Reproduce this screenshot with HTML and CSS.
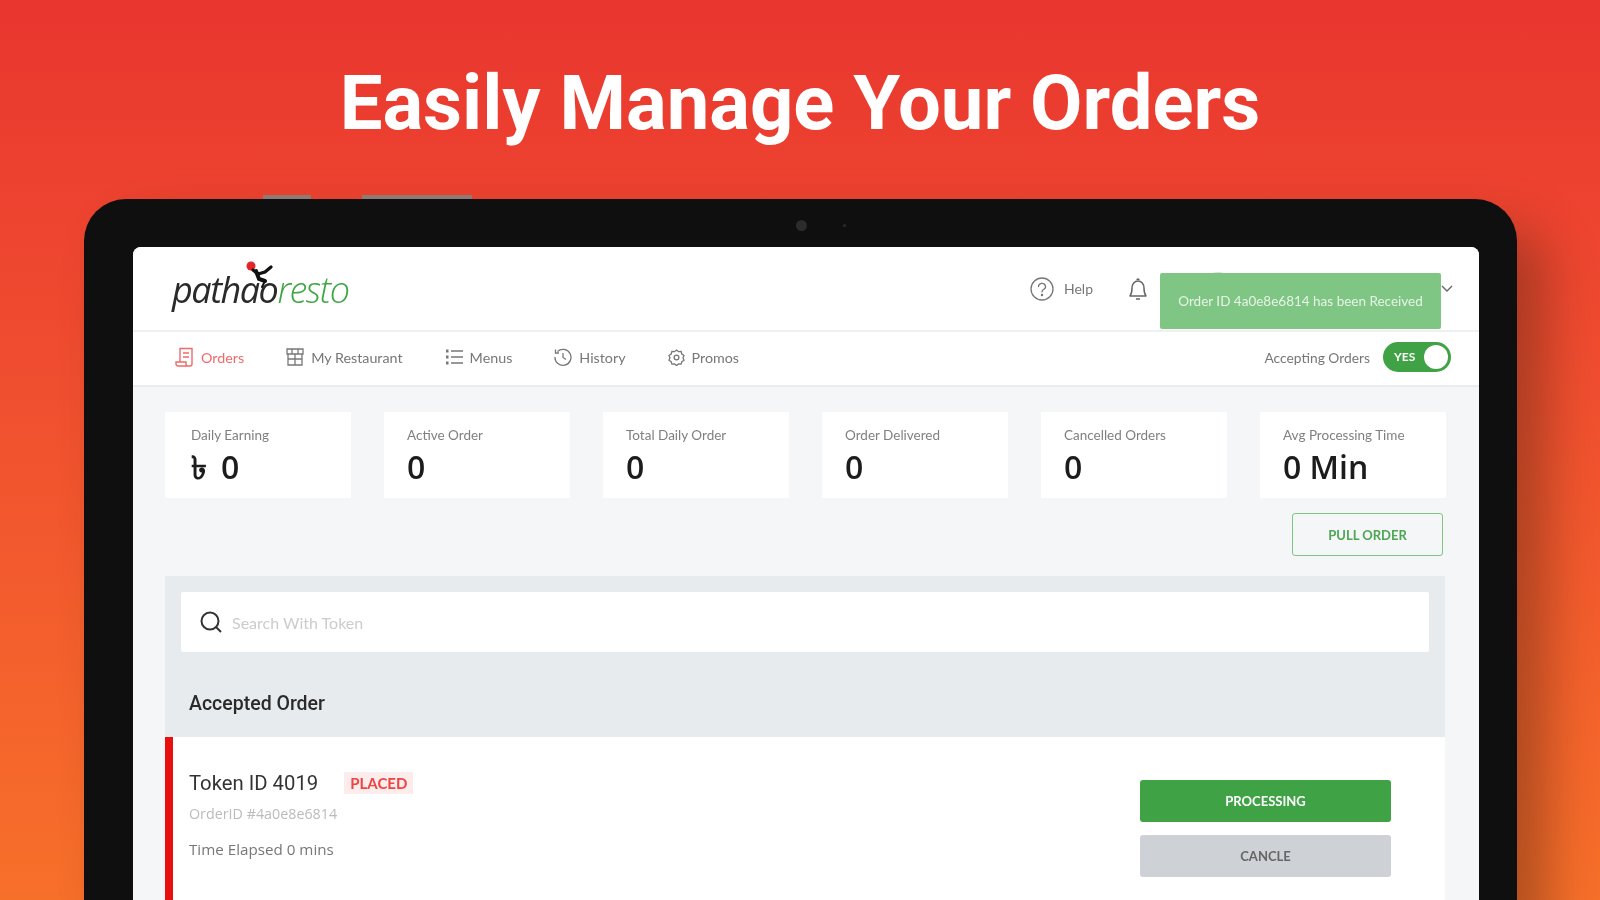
FILE: index.html
```html
<!DOCTYPE html>
<html lang="en">
<head>
    <meta charset="UTF-8">
    <meta name="viewport" content="width=device-width, initial-scale=1.0">
    <title>Easily Manage Your Orders</title>
    <link rel="stylesheet" href="styles.css">
</head>
<body>
    <div class="hero">
        <h1 class="hero-title">Easily Manage Your Orders</h1>

        <div class="tablet">
            <div class="tablet-buttons">
                <span class="side-btn side-btn-small"></span>
                <span class="side-btn side-btn-large"></span>
            </div>
            <div class="camera">
                <span class="lens"></span>
                <span class="sensor"></span>
            </div>

            <div class="screen">
                <header class="topbar">
                    <div class="logo">
                        <svg class="logo-rider" width="34" height="30" viewBox="0 0 34 30">
                            <circle cx="7" cy="5" r="4.500" fill="#e0262b"/>
                            <path d="M9 9l5 4 7-2 6-5" fill="none" stroke="#111" stroke-width="3.200" stroke-linecap="round"/>
                            <path d="M12 10l3 8 6 2" fill="none" stroke="#111" stroke-width="4" stroke-linecap="round"/>
                            <path d="M21 20l-3 6" fill="none" stroke="#111" stroke-width="2" stroke-linecap="round"/>
                        </svg>
                        <span class="logo-dark">pathao</span><span class="logo-green">resto</span>
                    </div>
                    <div class="topbar-right">
                        <div class="help">
                            <svg width="24" height="24" viewBox="0 0 24 24" fill="none" stroke="#777" stroke-width="1.3">
                                <circle cx="12" cy="12" r="11"/>
                                <path d="M8.500 9.500a3.500 3.200 0 1 1 5 3c-1 .6-1.500 1.200-1.500 2.400" stroke-linecap="round"/>
                                <circle cx="12" cy="18" r=".6"/>
                            </svg>
                            <span>Help</span>
                        </div>
                        <svg class="bell" width="22" height="26" viewBox="0 0 22 26" fill="none" stroke="#666" stroke-width="1.500">
                            <path d="M3 20c1.500-2 2-3 2-8 0-4 2.500-7 6-7s6 3 6 7c0 5 .5 6 2 8z" stroke-linejoin="round"/>
                            <path d="M9 23h4M10 4a1 1 0 0 1 2 0"/>
                        </svg>
                        <div class="account">
                            <span class="avatar"></span>
                            <svg width="12" height="8" viewBox="0 0 12 8" fill="none" stroke="#666" stroke-width="1.4"><path d="M1 1l5 5 5-5"/></svg>
                        </div>
                    </div>
                    <div class="toast">Order ID 4a0e8e6814 has been Received</div>
                </header>

                <nav class="tabs">
                    <a class="tab tab-active">
                        <svg width="19" height="20" viewBox="0 0 19 20" fill="none" stroke="currentColor" stroke-width="1.4">
                            <path d="M5 15V1.500h12V17a2 2 0 0 1-2 2H3a2 2 0 0 1-2-2v-2h10v2a2 2 0 0 0 2 2M8 6h6M8 10h6"/>
                        </svg>
                        Orders
                    </a>
                    <a class="tab">
                        <svg width="18" height="18" viewBox="0 0 18 18" fill="none" stroke="currentColor" stroke-width="1.300">
                            <path d="M2 6v11h14V6M1 1h16v5H1zM1 6h16M9 6v11M2 11h14M6 1v5M12 1v5"/>
                        </svg>
                        My Restaurant
                    </a>
                    <a class="tab">
                        <svg width="18" height="18" viewBox="0 0 18 18" fill="none" stroke="currentColor" stroke-width="1.500">
                            <path d="M6 3h12M6 9h12M6 15h12"/>
                            <path d="M1 3h2.500M1 9h2.500M1 15h2.500" stroke-width="3"/>
                        </svg>
                        Menus
                    </a>
                    <a class="tab">
                        <svg width="18" height="18" viewBox="0 0 18 18" fill="none" stroke="currentColor" stroke-width="1.300">
                            <path d="M3.500 3.500A8 8 0 1 1 1 9M1.500 1.500v3.500h3.500M9 5v4.500l3 2"/>
                        </svg>
                        History
                    </a>
                    <a class="tab">
                        <svg width="17" height="17" viewBox="0 0 17 17" fill="none" stroke="currentColor" stroke-width="1.300">
                            <path d="M8.500 1l2 1.700 2.600-.2.700 2.500 2.200 1.400-1 2.400 1 2.400-2.200 1.400-.7 2.500-2.600-.2-2 1.700-2-1.700-2.600.2-.7-2.500L1 11.200l1-2.400-1-2.400L3.200 5l.7-2.500 2.600.2z"/>
                            <circle cx="8.500" cy="8.500" r="2.400"/>
                        </svg>
                        Promos
                    </a>
                    <div class="accepting">
                        <span>Accepting Orders</span>
                        <div class="toggle">
                            <span class="toggle-label">YES</span>
                            <span class="toggle-knob"></span>
                        </div>
                    </div>
                </nav>

                <main class="content">
                    <section class="stats">
                        <div class="stat stat-first"><div class="stat-label">Daily Earning</div><div class="stat-value"><span class="taka">৳</span>0</div></div>
                        <div class="stat"><div class="stat-label">Active Order</div><div class="stat-value">0</div></div>
                        <div class="stat"><div class="stat-label">Total Daily Order</div><div class="stat-value">0</div></div>
                        <div class="stat"><div class="stat-label">Order Delivered</div><div class="stat-value">0</div></div>
                        <div class="stat"><div class="stat-label">Cancelled Orders</div><div class="stat-value">0</div></div>
                        <div class="stat"><div class="stat-label">Avg Processing Time</div><div class="stat-value">0 Min</div></div>
                    </section>

                    <div class="pull-row">
                        <button class="pull-btn">PULL ORDER</button>
                    </div>

                    <section class="panel">
                        <div class="search">
                            <svg width="24" height="24" viewBox="0 0 24 24" fill="none" stroke="#333" stroke-width="2">
                                <circle cx="11" cy="11" r="8.500"/>
                                <path d="M17 17l5 5"/>
                            </svg>
                            <span>Search With Token</span>
                        </div>
                        <h2 class="panel-title">Accepted Order</h2>
                        <div class="order">
                            <div class="order-info">
                                <div class="order-head">
                                    <span class="token">Token ID 4019</span>
                                    <span class="badge">PLACED</span>
                                </div>
                                <div class="order-id">OrderID #4a0e8e6814</div>
                                <div class="order-time">Time Elapsed 0 mins</div>
                            </div>
                            <div class="order-actions">
                                <button class="btn-processing">PROCESSING</button>
                                <button class="btn-cancel">CANCLE</button>
                            </div>
                        </div>
                    </section>
                </main>
            </div>
        </div>
    </div>
</body>
</html>
```

FILE: styles.css
```css
body {
    margin: 0;
    font-family: Lato, Arial, sans-serif;
}
.hero {
    height: 900px;
    overflow: hidden;
    background: linear-gradient(180deg, #e9362f 0%, #ef4a30 35%, #f7702a 100%);
}
.hero-title {
    margin: 0;
    height: 199px;
    padding-top: 63px;
    box-sizing: border-box;
    font-family: Roboto, Arial, sans-serif;
    font-size: 76px;
    line-height: 80px;
    font-weight: 700;
    color: #fff;
    text-align: center;
    filter: blur(0.4px);
}
.tablet {
    position: relative;
    width: 1433px;
    height: 800px;
    margin-left: 84px;
    padding: 48px 38px 0 49px;
    box-sizing: border-box;
    background: #0f0f0f;
    border-radius: 42px 42px 0 0;
    box-shadow: 30px 30px 50px rgba(90, 40, 20, 0.45);
}
.tablet-buttons .side-btn {
    position: absolute;
    top: -4px;
    height: 4px;
    background: #8f7a75;
}
.side-btn-small {
    left: 179px;
    width: 48px;
}
.side-btn-large {
    left: 278px;
    width: 110px;
}
.camera .lens, .camera .sensor {
    position: absolute;
    border-radius: 50%;
    background: #2c2c2c;
}
.camera .lens {
    left: 712px;
    top: 21px;
    width: 11px;
    height: 11px;
}
.camera .sensor {
    left: 759px;
    top: 25px;
    width: 3px;
    height: 3px;
}
.screen {
    height: 760px;
    background: #f4f6f8;
    border-radius: 8px 8px 0 0;
    overflow: hidden;
    filter: blur(0.7px);
}

/* top bar */
.topbar {
    position: relative;
    height: 83px;
    display: flex;
    justify-content: space-between;
    align-items: center;
    padding: 0 26px 0 39px;
    background: #fff;
    border-bottom: 2px solid #eef0f2;
}
.logo {
    position: relative;
    font-family: "Open Sans", Arial, sans-serif;
    font-style: italic;
    font-weight: 400;
    font-size: 36px;
    letter-spacing: -1.500px;
    line-height: 44px;
    margin-top: 2px;
}
.logo-dark {
    color: #2a2a2a;
}
.logo-green {
    color: #3fa644;
    font-weight: 300;
}
.logo-rider {
    position: absolute;
    left: 72px;
    top: -7px;
}
.topbar-right {
    display: flex;
    align-items: center;
}
.help {
    display: flex;
    align-items: center;
    gap: 10px;
    font-size: 14px;
    color: #777;
}
.bell {
    margin-left: 34px;
}
.account {
    display: flex;
    align-items: center;
    width: 292px;
    margin-left: 12px;
    justify-content: space-between;
}
.avatar {
    width: 34px;
    height: 34px;
    border-radius: 50%;
    background: #ddd;
    margin-left: 40px;
}
.toast {
    position: absolute;
    left: 1027px;
    top: 26px;
    width: 281px;
    height: 56px;
    line-height: 56px;
    text-align: center;
    background: #7fc583;
    color: #e6f4e7;
    font-size: 13.500px;
    border-radius: 2px;
}

/* tabs */
.tabs {
    height: 55px;
    display: flex;
    align-items: center;
    padding: 0 28px 3px 42px;
    box-sizing: border-box;
    background: #fff;
    border-bottom: 2px solid #e9ecef;
    font-size: 14.300px;
    color: #777;
}
.tab {
    display: flex;
    align-items: center;
    gap: 7px;
    margin-right: 42px;
}
.tab-active {
    color: #ef6a6a;
}
.accepting {
    margin-left: auto;
    display: flex;
    align-items: center;
    gap: 13px;
    font-size: 13.800px;
}
.toggle {
    position: relative;
    width: 68px;
    height: 30px;
    border-radius: 15px;
    background: #3fa244;
    color: #fff;
    font-size: 12px;
    font-weight: 700;
    line-height: 30px;
    padding-left: 11px;
    box-sizing: border-box;
}
.toggle-knob {
    position: absolute;
    right: 3px;
    top: 3px;
    width: 24px;
    height: 24px;
    border-radius: 50%;
    background: #fff;
}

/* page content */
.content {
    padding: 25px 34px 0 32px;
}
.stats {
    display: grid;
    grid-template-columns: repeat(6, 186px);
    gap: 33px;
}
.stat {
    height: 86px;
    background: #fff;
    padding: 15px 0 0 23px;
    box-sizing: border-box;
}
.stat-first {
    padding-left: 26px;
}
.stat-label {
    font-size: 13.500px;
    line-height: 16px;
    color: #808080;
}
.stat-value {
    font-family: "Open Sans", Arial, sans-serif;
    font-size: 32px;
    font-weight: 600;
    line-height: 40px;
    margin-top: 4px;
    color: #1c1c1c;
}
.taka {
    display: inline-block;
    margin-right: 14px;
    font-weight: 700;
}
.pull-row {
    display: flex;
    justify-content: flex-end;
    margin-top: 15px;
}
.pull-btn {
    width: 151px;
    height: 43px;
    background: transparent;
    border: 1px solid #7fc583;
    border-radius: 3px;
    color: #4fa655;
    font-family: Lato, Arial, sans-serif;
    font-size: 13px;
    font-weight: 700;
    margin-right: 2px;
}
.panel {
    margin-top: 20px;
    padding: 16px 16px 0;
    background: #e8ebee;
}
.search {
    height: 60px;
    display: flex;
    align-items: center;
    gap: 9px;
    padding-left: 18px;
    background: #fff;
    font-size: 16px;
    color: #ccc;
    border-radius: 2px;
}
.panel-title {
    margin: 0;
    height: 85px;
    line-height: 103px;
    padding-left: 8px;
    font-family: Roboto, Arial, sans-serif;
    font-size: 19.500px;
    font-weight: 500;
    color: #2a2a2a;
}
.order {
    display: flex;
    justify-content: space-between;
    margin: 0 -16px;
    padding: 33px 54px 0 16px;
    height: 150px;
    background: #fff;
    border-left: 8px solid #e90f0f;
}
.order-head {
    display: flex;
    align-items: center;
    gap: 26px;
    height: 26px;
}
.token {
    font-family: Roboto, Arial, sans-serif;
    font-size: 20.300px;
    color: #333;
}
.badge {
    background: #fdecec;
    color: #ef4444;
    font-size: 15px;
    font-weight: 700;
    padding: 2px 6px;
}
.order-id {
    margin-top: 8px;
    font-family: "Open Sans", Arial, sans-serif;
    font-size: 14.300px;
    color: #bbb;
}
.order-time {
    margin-top: 16px;
    font-family: "Open Sans", Arial, sans-serif;
    font-size: 15.200px;
    color: #777;
}
.order-actions {
    display: flex;
    flex-direction: column;
    gap: 13px;
    margin-top: 10px;
}
.order-actions button {
    width: 251px;
    height: 42px;
    border: none;
    border-radius: 3px;
    font-family: Lato, Arial, sans-serif;
    font-size: 13px;
    font-weight: 700;
}
.btn-processing {
    background: #3fa244;
    color: #fff;
}
.btn-cancel {
    background: #ced1d5;
    color: #666;
}
```
